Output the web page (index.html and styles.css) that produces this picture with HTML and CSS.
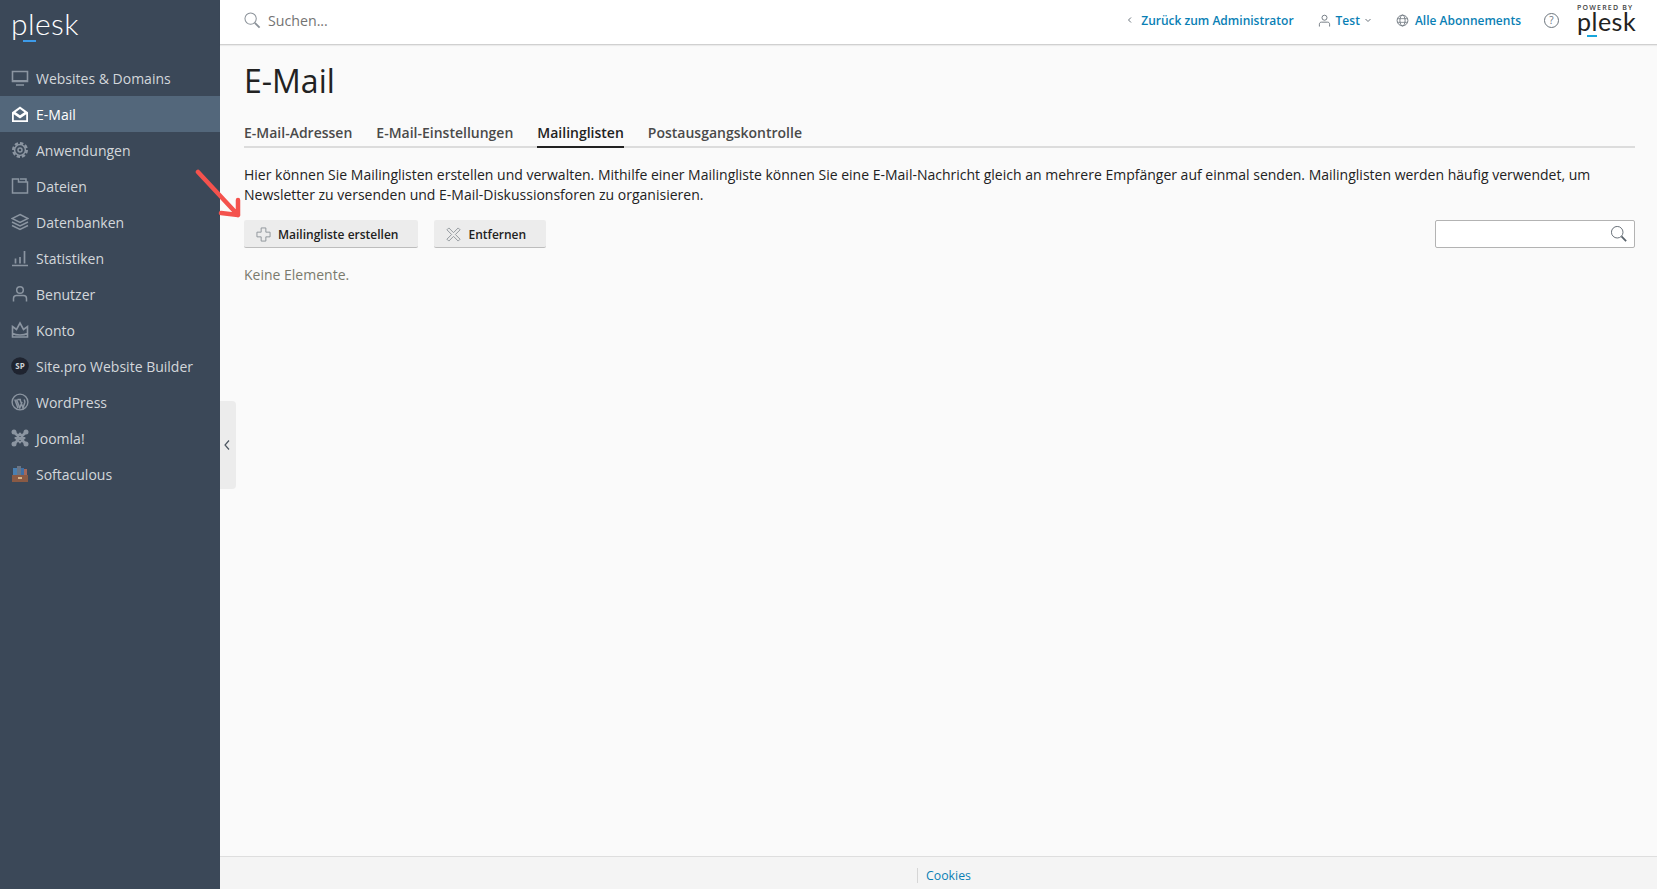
FILE: index.html
```html
<!DOCTYPE html>
<html lang="de">
<head>
<meta charset="utf-8">
<title>E-Mail</title>
<link rel="stylesheet" href="styles.css">
</head>
<body>
<aside class="sidebar">
  <div class="brand"><span class="brand-word">plesk</span><span class="brand-dash"></span></div>
  <nav class="nav">
    <a class="nav-item"><svg class="nav-icon" viewBox="0 0 18 18"><path d="M1.500 2.500h15v10h-15z" fill="none" stroke="currentColor" stroke-width="1.600"/><path d="M2 11h14v1.500H2zM5 15.200h8v1.500H5z" fill="currentColor"/></svg><span>Websites &amp; Domains</span></a>
    <a class="nav-item active"><svg class="nav-icon" viewBox="0 0 18 18"><path d="M1 7.200 9 1.500l8 5.700V17H1z" fill="#fff"/><path d="M4.600 7.200 9 4l4.400 3.200L9 10.200z" fill="#53677b"/><path d="M2.800 9.200 9 13.400l6.200-4.200v6H2.800z" fill="#53677b"/></svg><span>E-Mail</span></a>
    <a class="nav-item"><svg class="nav-icon" viewBox="0 0 18 18"><circle cx="9" cy="9" r="6.800" fill="none" stroke="currentColor" stroke-width="2.400" stroke-dasharray="3.400 1.900"/><circle cx="9" cy="9" r="5.400" fill="none" stroke="currentColor" stroke-width="1.500"/><circle cx="9" cy="9" r="2" fill="none" stroke="currentColor" stroke-width="1.500"/></svg><span>Anwendungen</span></a>
    <a class="nav-item"><svg class="nav-icon" viewBox="0 0 18 18"><path d="M1.500 2h6v3h9v11h-15z M9 2h6v3" fill="none" stroke="currentColor" stroke-width="1.500"/></svg><span>Dateien</span></a>
    <a class="nav-item"><svg class="nav-icon" viewBox="0 0 18 18"><path d="M9 1.500 17 5.500 9 9.500 1 5.500z M1 9l8 4 8-4M1 12.500l8 4 8-4" fill="none" stroke="currentColor" stroke-width="1.500"/></svg><span>Datenbanken</span></a>
    <a class="nav-item"><svg class="nav-icon" viewBox="0 0 18 18"><path d="M1 16.500h16M4.500 14.500v-5M9 14.500V8M13.500 14.500V2" fill="none" stroke="currentColor" stroke-width="1.700"/></svg><span>Statistiken</span></a>
    <a class="nav-item"><svg class="nav-icon" viewBox="0 0 18 18"><circle cx="9" cy="5" r="3.300" fill="none" stroke="currentColor" stroke-width="1.500"/><path d="M2.500 16.500v-3c0-2 1.500-3 3-3h7c1.500 0 3 1 3 3v3" fill="none" stroke="currentColor" stroke-width="1.500"/></svg><span>Benutzer</span></a>
    <a class="nav-item"><svg class="nav-icon" viewBox="0 0 18 18"><path d="M1.500 5.500l4 3L9 2l3.500 6.500 4-3V16h-15z M1.500 12.500c4 2 11 2 15 0" fill="none" stroke="currentColor" stroke-width="1.600"/></svg><span>Konto</span></a>
    <a class="nav-item"><svg class="nav-icon" viewBox="0 0 18 18"><circle cx="9" cy="9" r="8.800" fill="#1f2430"/><text class="sp-mark" x="9" y="11.800" text-anchor="middle">SP</text></svg><span>Site.pro Website Builder</span></a>
    <a class="nav-item"><svg class="nav-icon" viewBox="0 0 18 18"><circle cx="9" cy="9" r="7.900" fill="none" stroke="currentColor" stroke-width="1.400"/><path d="M3.800 6.500 7 15M6.500 6.500h3.500M5.500 6.500l3.300 8.500 2.200-6M9 6.500l3 8.500 1.800-5.500c.3-1.200-.2-2-.7-3" fill="none" stroke="currentColor" stroke-width="1.500"/></svg><span>WordPress</span></a>
    <a class="nav-item"><svg class="nav-icon" viewBox="0 0 18 18"><path d="M4 4l10 10M14 4 4 14M5 9l4-4 4 4-4 4z" fill="none" stroke="currentColor" stroke-width="2.600"/><circle cx="3" cy="3" r="2.500" fill="currentColor"/><circle cx="15" cy="3" r="2.500" fill="currentColor"/><circle cx="3" cy="15" r="2.500" fill="currentColor"/><circle cx="15" cy="15" r="2.500" fill="currentColor"/></svg><span>Joomla!</span></a>
    <a class="nav-item"><svg class="nav-icon" viewBox="0 0 18 18"><path d="M1 10h16v7H1z" fill="#8a5a44"/><path d="M2 3h4v7H2z" fill="#4a7fb0"/><path d="M6 1h4v9H6z" fill="#6a7585"/><path d="M10 3h3v7h-3z" fill="#3f6fa5"/><path d="M13 4h3v6h-3z" fill="#a4675a"/><path d="M7 12h4v2H7z" fill="#d2b48c"/></svg><span>Softaculous</span></a>
  </nav>
</aside>
<div class="main">
  <header class="topbar">
    <div class="search">
      <svg class="search-icon" viewBox="0 0 18 18"><circle cx="7" cy="7" r="6" fill="none" stroke="#8b9299" stroke-width="1.100"/><path d="M11.500 11.500 16.500 16.500" stroke="#8b9299" stroke-width="2" fill="none"/></svg>
      <span class="search-text">Suchen...</span>
    </div>
    <div class="top-links">
      <a class="top-link back"><svg class="mini" viewBox="0 0 8 8"><path d="M5 1.500 2.500 4 5 6.500" fill="none" stroke="#6c757d"/></svg>Zurück zum Administrator</a>
      <a class="top-link user"><svg class="top-icon" viewBox="0 0 14 14"><circle cx="7" cy="4" r="2.700" fill="none" stroke="#6c757d"/><path d="M1.500 13.500v-2.500c0-1.500 1-2.200 2.200-2.200h6.600c1.200 0 2.200.7 2.200 2.200v2.500" fill="none" stroke="#6c757d"/></svg><span class="user-name">Test</span><svg class="mini" viewBox="0 0 8 8"><path d="M1.500 3 4 5.500 6.500 3" fill="none" stroke="#6c757d"/></svg></a>
      <a class="top-link subs"><svg class="top-icon" viewBox="0 0 14 14"><circle cx="7" cy="7" r="5.800" fill="none" stroke="#6c757d"/><ellipse cx="7" cy="7" rx="2.800" ry="5.800" fill="none" stroke="#6c757d"/><path d="M1.500 5h11M1.500 9h11" stroke="#6c757d" stroke-width=".8"/></svg>Alle Abonnements</a>
      <span class="help">?</span>
      <div class="powered"><span class="powered-by">POWERED BY</span><span class="powered-word">plesk</span><span class="powered-dash"></span></div>
    </div>
  </header>
  <main class="content">
    <h1 class="title">E-Mail</h1>
    <div class="tabs">
      <a class="tab">E-Mail-Adressen</a>
      <a class="tab">E-Mail-Einstellungen</a>
      <a class="tab current">Mailinglisten</a>
      <a class="tab">Postausgangskontrolle</a>
    </div>
    <p class="intro">Hier können Sie Mailinglisten erstellen und verwalten. Mithilfe einer Mailingliste können Sie eine E-Mail-Nachricht gleich an mehrere Empfänger auf einmal senden. Mailinglisten werden häufig verwendet, um Newsletter zu versenden und E-Mail-Diskussionsforen zu organisieren.</p>
    <div class="toolbar">
      <button class="btn"><svg class="btn-icon" viewBox="0 0 16 16"><path d="M5.500 1h5v4.500H15v5h-4.500V15h-5v-4.500H1v-5h4.500z" fill="none" stroke="#8d9399"/></svg>Mailingliste erstellen</button>
      <button class="btn"><svg class="btn-icon" viewBox="0 0 16 16"><path d="M3 1 8 6l5-5 2 2-5 5 5 5-2 2-5-5-5 5-2-2 5-5-5-5z" fill="none" stroke="#8d9399"/></svg>Entfernen</button>
      <div class="filter"><svg class="filter-icon" viewBox="0 0 18 18"><circle cx="7" cy="7" r="6.500" fill="none" stroke="#59626b" stroke-width="1"/><path d="M11.800 11.800 17 17" stroke="#59626b" stroke-width="2" fill="none"/></svg></div>
    </div>
    <p class="empty">Keine Elemente.</p>
  </main>
  <footer class="footer"><a class="cookies">Cookies</a></footer>
</div>
<div class="collapse"><svg class="collapse-icon" viewBox="0 0 8 12"><path d="M6 1.500 2 6l4 4.500" fill="none" stroke="#4b5560" stroke-width="1.200"/></svg></div>
<svg class="arrow" viewBox="0 0 50 56"><path d="M3 4 43 47M43 32 43 47 26 45" fill="none" stroke="#f4524d" stroke-width="4.500" stroke-linecap="round" stroke-linejoin="round"/></svg>
</body>
</html>
```

FILE: styles.css
```css
* { box-sizing: border-box; }
html, body { height: 100%; }
body {
  margin: 0;
  display: flex;
  height: 889px;
  overflow: hidden;
  background: #fafafa;
  font-family: "Open Sans", sans-serif;
  font-size: 14px;
  color: #222;
}
a { text-decoration: none; }

.sidebar { flex: 0 0 220px; background: #3b4858; color: #d3d7db; }
.brand { position: relative; height: 60px; padding: 3px 0 0 11px; }
.brand-word { display: block; font-family: "Lato", sans-serif; font-weight: 300; font-size: 30px; line-height: 40px; letter-spacing: .4px; color: #fff; }
.brand-dash { position: absolute; left: 23px; top: 40px; width: 13px; height: 1.500px; background: #3d9be9; }
.nav { display: flex; flex-direction: column; }
.nav-item { display: flex; align-items: center; height: 36px; padding-left: 11px; gap: 7px; font-size: 14px; color: #d3d7db; }
.nav-item.active { background: #53677b; color: #fff; }
.nav-icon { flex: none; width: 18px; height: 18px; color: #8b95a1; }
.nav-item.active .nav-icon { color: #fff; }
.sp-mark { font-family: "Open Sans", sans-serif; font-size: 8px; font-weight: 700; fill: #cfd3d8; }

.main { flex: 1; min-width: 0; display: flex; flex-direction: column; }
.topbar { flex: 0 0 45px; display: flex; align-items: center; justify-content: space-between; padding: 0 22px 4px 24px; background: #fff; border-bottom: 1px solid #d0d0d0; box-shadow: 0 1px 1px rgba(0,0,0,.06); }
.search { display: flex; align-items: center; gap: 7px; }
.search-icon { width: 17px; height: 17px; }
.search-text { font-size: 14.200px; color: #737373; }
.top-links { display: flex; align-items: center; }
.top-link { display: flex; align-items: center; font-size: 12px; font-weight: 600; color: #0a7fb5; }
.mini { width: 8px; height: 8px; }
.back .mini { margin-right: 7px; }
.back { margin-right: 24px; }
.user { margin-right: 24px; }
.user .top-icon { margin-right: 5px; }
.user .mini { margin-left: 4px; }
.top-icon { width: 13px; height: 13px; margin-right: 6px; }
.subs { margin-right: 23px; }
.help { width: 15px; height: 15px; line-height: 13px; margin-right: 18px; text-align: center; font-size: 10px; color: #6c757d; border: 1px solid #6c757d; border-radius: 50%; }
.powered { position: relative; width: 58px; height: 38px; }
.powered-by { position: absolute; left: 0; top: 2px; font-size: 7px; line-height: 9px; letter-spacing: 1.200px; font-weight: 600; color: #444; white-space: nowrap; }
.powered-word { position: absolute; left: 0; top: 11px; font-family: "Lato", sans-serif; font-weight: 400; font-size: 25px; line-height: 18px; letter-spacing: .5px; color: #222; }
.powered-dash { position: absolute; left: 10px; top: 34px; width: 10px; height: 2px; background: #18a6dc; }

.content { flex: 1; padding: 0 22px 0 24px; }
.title { margin: 14px 0 0; font-size: 32px; font-weight: 400; line-height: 44px; color: #222; }
.tabs { display: flex; gap: 24px; margin-top: 15px; border-bottom: 2px solid #dcdcdc; height: 30px; }
.tab { font-size: 14px; font-weight: 600; line-height: 30px; height: 30px; color: #4a4a4a; }
.tab.current { color: #222; border-bottom: 2px solid #222; }
.intro { margin: 17px 0 0; font-size: 14px; line-height: 20px; color: #222; }
.toolbar { display: flex; align-items: center; gap: 16px; margin-top: 15px; }
.btn { display: flex; align-items: center; height: 28px; padding: 1px 20px 0 12px; gap: 7px; border: 0; border-bottom: 1px solid #bdbdbd; border-radius: 2px; background: #ececec; font-family: inherit; font-size: 12px; font-weight: 600; color: #222; }
.btn-icon { width: 15px; height: 15px; }
.filter { margin-left: auto; display: flex; align-items: center; justify-content: flex-end; width: 200px; height: 28px; padding-right: 7px; background: #fff; border: 1px solid #b3b3b3; border-radius: 2px; }
.filter-icon { width: 16px; height: 16px; }
.empty { margin: 17px 0 0; font-size: 14px; line-height: 20px; color: #7a7a6e; }
.footer { flex: 0 0 33px; display: flex; justify-content: center; padding: 11px 0 0 11px; background: #f4f4f4; border-top: 1px solid #dedede; }
.cookies { display: block; height: 15px; line-height: 15px; padding-left: 8px; font-size: 12.300px; color: #0a7fb5; border-left: 1px solid #d6d6d6; }

.collapse { position: absolute; left: 220px; top: 401px; display: flex; align-items: center; justify-content: center; width: 16px; height: 88px; padding-right: 2px; background: #ececec; border-radius: 0 4px 4px 0; }
.collapse-icon { width: 8px; height: 12px; }
.arrow { position: absolute; left: 195px; top: 168px; width: 50px; height: 56px; }
```
